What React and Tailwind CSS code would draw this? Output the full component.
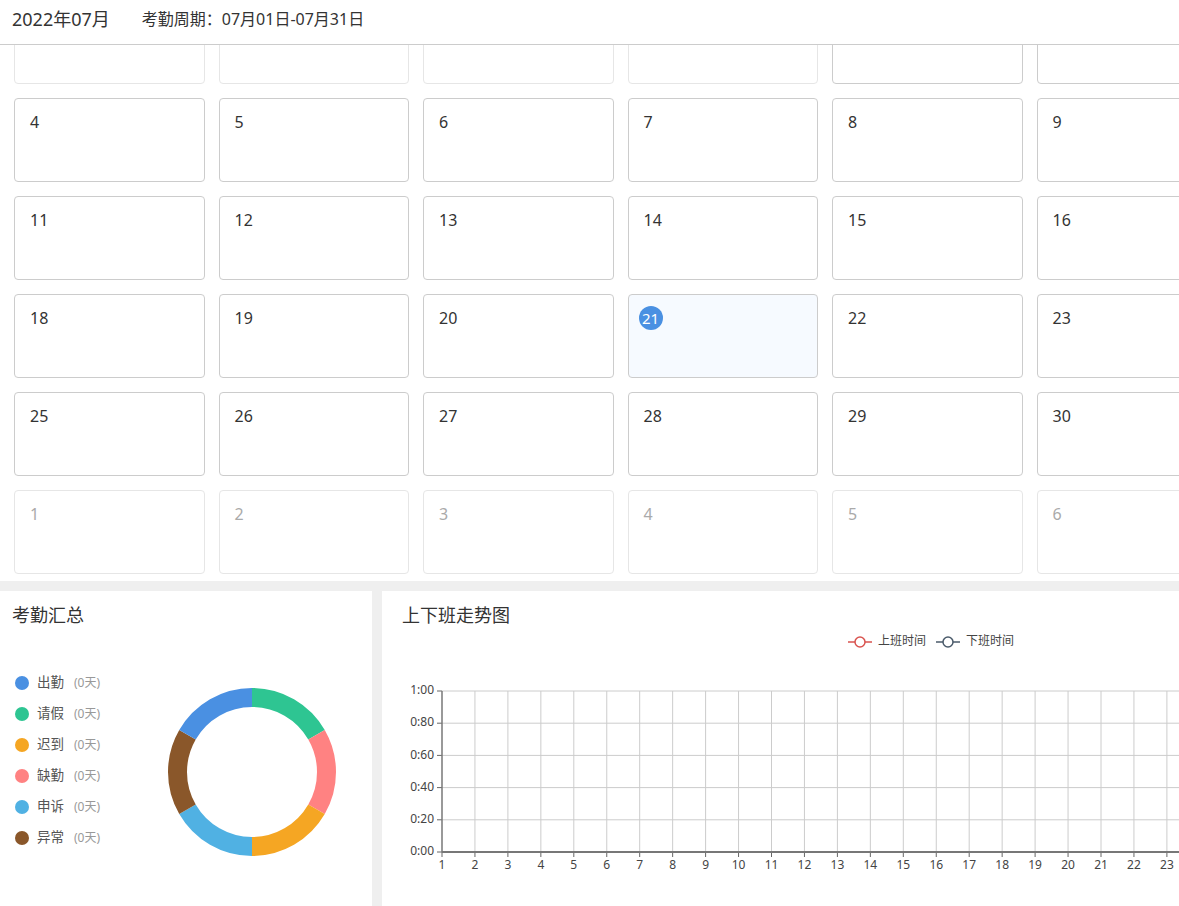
import React from 'react'

const font = "font-['Noto_Sans','Noto_Sans_CJK_SC',sans-serif]"

// July 2022, weeks start on Monday
const weeks = [
  [27, 28, 29, 30, 1, 2, 3].map((d, i) => ({ d, other: i < 4 })),
  [4, 5, 6, 7, 8, 9, 10].map((d) => ({ d })),
  [11, 12, 13, 14, 15, 16, 17].map((d) => ({ d })),
  [18, 19, 20, 21, 22, 23, 24].map((d) => ({ d, today: d === 21 })),
  [25, 26, 27, 28, 29, 30, 31].map((d) => ({ d })),
  [1, 2, 3, 4, 5, 6, 7].map((d) => ({ d, other: true })),
]

const summary = [
  { label: '出勤', color: '#4a90e2' },
  { label: '请假', color: '#2ec592' },
  { label: '迟到', color: '#f5a623' },
  { label: '缺勤', color: '#ff8282' },
  { label: '申诉', color: '#50b1e3' },
  { label: '异常', color: '#8a572a' },
]

// clockwise from the top
const ring = ['#2ec592', '#ff8282', '#f5a623', '#50b1e3', '#8a572a', '#4a90e2']

function arcPath(a0, a1, R, r, c) {
  const rad = (a) => (a * Math.PI) / 180
  const pt = (a, rr) => [c + rr * Math.sin(rad(a)), c - rr * Math.cos(rad(a))]
  const [x0, y0] = pt(a0, R)
  const [x1, y1] = pt(a1, R)
  const [x2, y2] = pt(a1, r)
  const [x3, y3] = pt(a0, r)
  return `M${x0} ${y0} A${R} ${R} 0 0 1 ${x1} ${y1} L${x2} ${y2} A${r} ${r} 0 0 0 ${x3} ${y3} Z`
}

function DayCell({ day }) {
  const border = day.other ? 'border-[#e6e6e6]' : 'border-[#cccccc]'
  const bg = day.today ? 'bg-[#f6faff]' : 'bg-white'
  return (
    <div className={`h-[84px] rounded-[4px] border ${border} ${bg} pl-[10px] pt-[11px]`}>
      {day.today ? (
        <span className="inline-flex h-6 w-6 items-center justify-center rounded-full bg-[#4a90e2] text-[15px] text-white">
          {day.d}
        </span>
      ) : (
        <span
          className={`inline-block h-6 px-[5px] text-[16px] leading-6 ${
            day.other ? 'text-[#aaaaaa]' : 'text-[#333333]'
          }`}
        >
          {day.d}
        </span>
      )}
    </div>
  )
}

function Donut() {
  return (
    <svg width="170" height="170" viewBox="0 0 170 170">
      {ring.map((color, i) => (
        <path key={color} d={arcPath(i * 60, (i + 1) * 60, 84, 65, 85)} fill={color} />
      ))}
    </svg>
  )
}

function TrendChart() {
  const top = 64
  const step = 32.2
  const bottom = top + step * 5
  const left = 60
  const xs = Array.from({ length: 31 }, (_, i) => left + i * 32.95)
  const yLabels = ['1:00', '0:80', '0:60', '0:40', '0:20', '0:00']

  return (
    <svg width="1100" height="279" className="block" fontSize="12">
      {/* legend */}
      <line x1="466" y1="15" x2="490" y2="15" stroke="#d9534f" strokeWidth="1.5" />
      <circle cx="478" cy="15" r="5" fill="#fff" stroke="#d9534f" strokeWidth="1.5" />
      <text x="496" y="15" dominantBaseline="middle" fill="#444">上班时间</text>
      <line x1="554" y1="15" x2="578" y2="15" stroke="#4a5a6a" strokeWidth="1.5" />
      <circle cx="566" cy="15" r="5" fill="#fff" stroke="#4a5a6a" strokeWidth="1.5" />
      <text x="584" y="15" dominantBaseline="middle" fill="#444">下班时间</text>

      {/* grid */}
      {yLabels.map((label, i) => {
        const y = top + i * step
        return (
          <g key={label}>
            <line x1={left} y1={y} x2="1100" y2={y} stroke="#cccccc" />
            <line x1={left - 5} y1={y} x2={left} y2={y} stroke="#666" />
            <text x={left - 8} y={y} textAnchor="end" dominantBaseline="middle" fill="#444">
              {label}
            </text>
          </g>
        )
      })}
      {xs.map((x, i) => (
        <g key={i}>
          {i > 0 && <line x1={x} y1={top} x2={x} y2={bottom} stroke="#cccccc" />}
          <line x1={x} y1={bottom} x2={x} y2={bottom + 5} stroke="#666" />
          <text x={x} y={bottom + 17} textAnchor="middle" fill="#444">
            {i + 1}
          </text>
        </g>
      ))}
      <line x1={left} y1={top} x2={left} y2={bottom} stroke="#777" strokeWidth="1.5" />
      <line x1={left} y1={bottom} x2="1100" y2={bottom} stroke="#777" strokeWidth="2" />
    </svg>
  )
}

export default function App() {
  return (
    <div className={`h-[906px] w-full overflow-hidden bg-white ${font}`}>
      <header className="relative z-10 flex h-[45px] items-center gap-[32px] border-b border-[#cccccc] bg-white px-3 pb-[6px]">
        <span className="text-[18px] text-[#333333]">2022年07月</span>
        <span className="text-[16px] text-[#333333]">考勤周期：07月01日-07月31日</span>
      </header>

      <div className="h-[536px] overflow-hidden">
        <div className="-mt-[45px] grid w-max grid-cols-[repeat(7,190.5px)] gap-[14px] px-[14px]">
          {weeks.flat().map((day, i) => (
            <DayCell key={i} day={day} />
          ))}
        </div>
      </div>

      <div className="flex h-[325px] gap-[10px] bg-[#efefef] pt-[10px]">
        <section className="w-[372px] shrink-0 bg-white px-3 pt-[12px]">
          <h2 className="text-[18px] leading-6 text-[#333333]">考勤汇总</h2>
          <div className="mt-[40px] flex">
            <ul className="w-[155px] shrink-0 pl-[3px]">
              {summary.map((item) => (
                <li key={item.label} className="flex h-[31px] items-center">
                  <span
                    className="h-[14px] w-[14px] rounded-full"
                    style={{ backgroundColor: item.color }}
                  />
                  <span className="ml-2 text-[13.5px] text-[#555555]">{item.label}</span>
                  <span className="ml-[10px] text-[12px] text-[#999999]">(0天)</span>
                </li>
              ))}
            </ul>
            <div className="mt-[20px]">
              <Donut />
            </div>
          </div>
        </section>

        <section className="min-w-0 flex-1 overflow-hidden bg-white pt-[12px]">
          <h2 className="pl-5 text-[18px] leading-6 text-[#333333]">上下班走势图</h2>
          <TrendChart />
        </section>
      </div>
    </div>
  )
}
